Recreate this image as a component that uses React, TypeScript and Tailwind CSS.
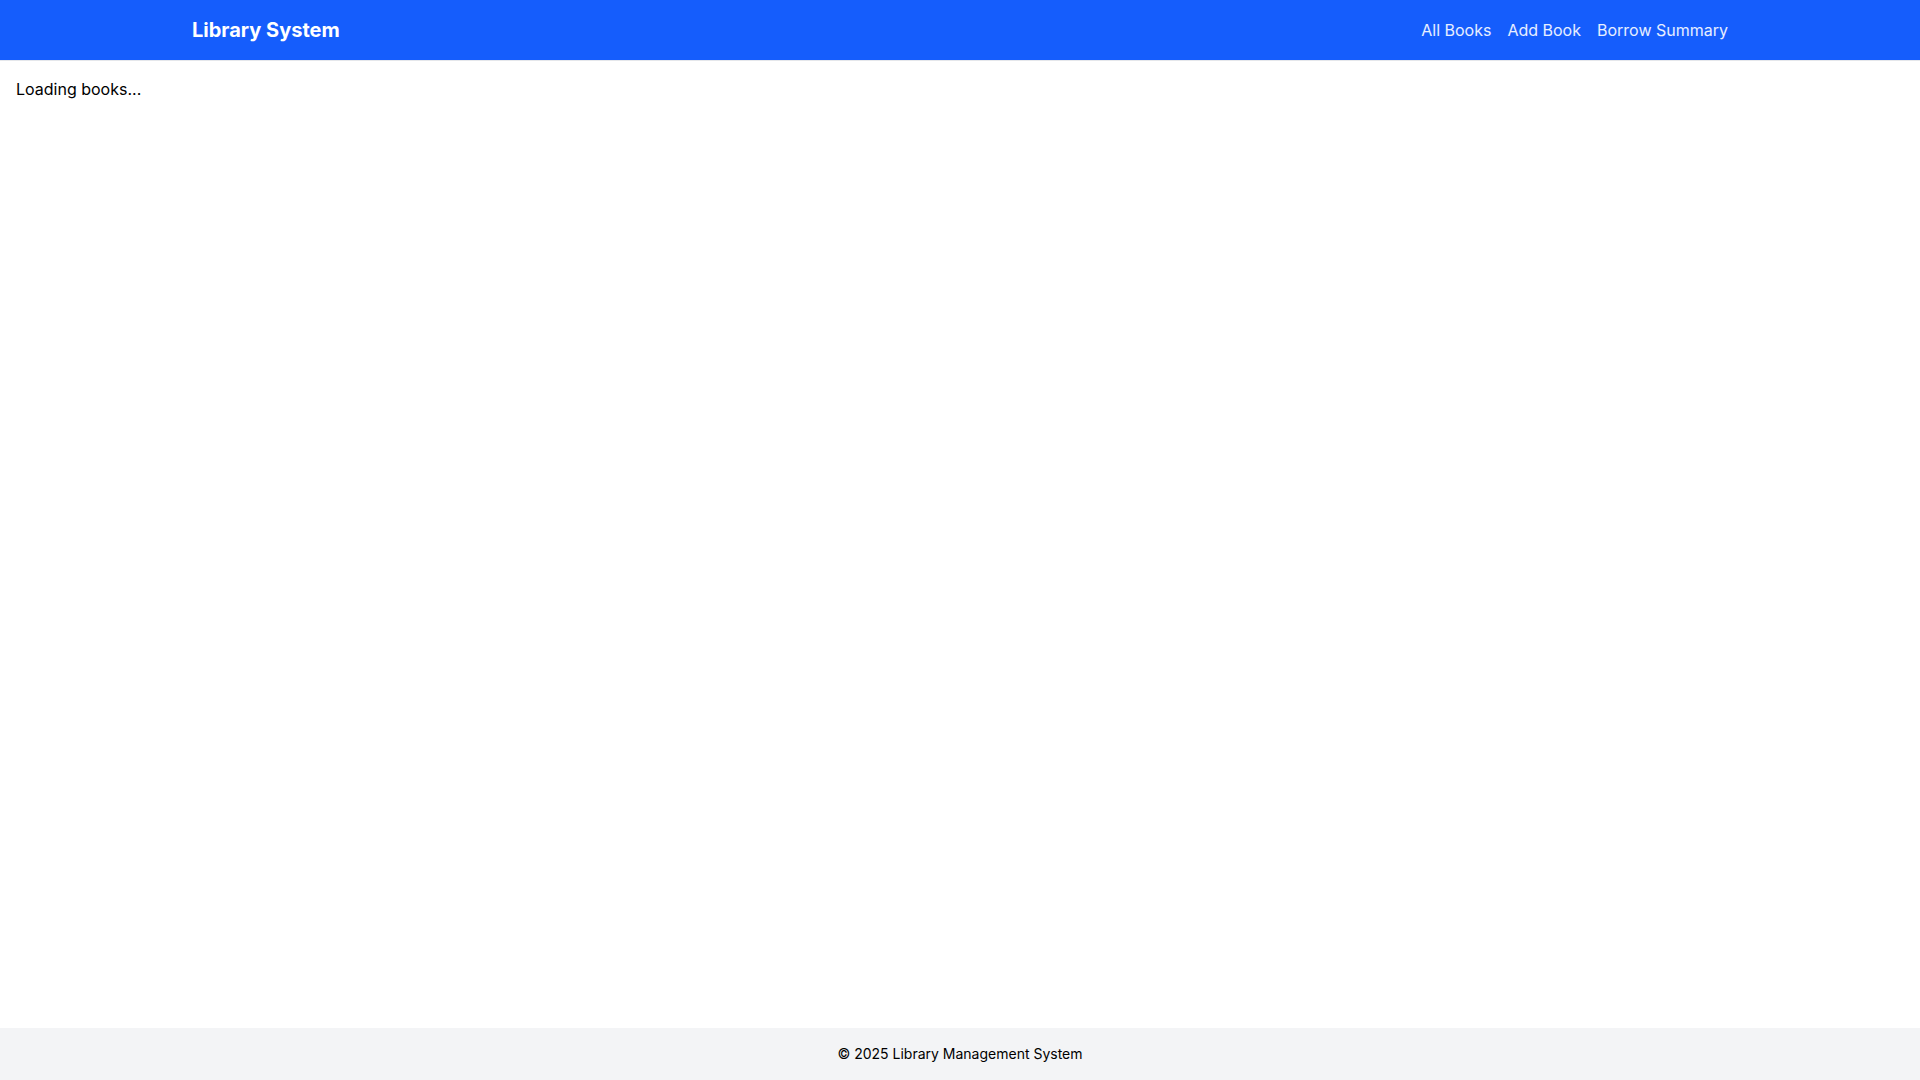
import React from 'react';

const Navbar = () => {
    return (
        <nav className="bg-blue-600 text-white border-b border-gray-200">
            <div className="container mx-auto h-[60px] flex items-center justify-between">
                <h1 className="text-xl font-bold">Library System</h1>
                <div className="flex items-center gap-4 text-base text-white/90">
                    <a href="#">All Books</a>
                    <a href="#">Add Book</a>
                    <a href="#">Borrow Summary</a>
                </div>
            </div>
        </nav>
    );
};

export default function App() {
    return (
        <div className="min-h-screen flex flex-col bg-white text-black" style={{ fontFamily: 'Inter, "Noto Sans", sans-serif' }}>
            <Navbar />
            <main className="flex-1 p-4">
                <p>Loading books...</p>
            </main>
            <footer className="bg-gray-100 py-4 text-center text-sm">
                © 2025 Library Management System
            </footer>
        </div>
    );
}
